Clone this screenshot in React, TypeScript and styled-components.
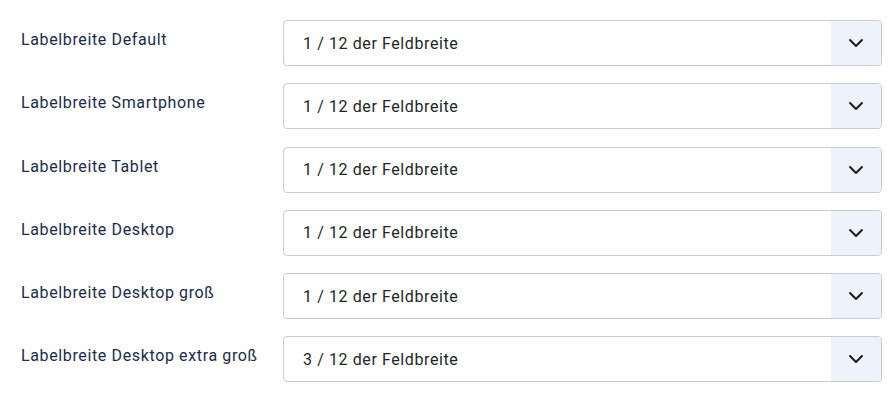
import React, { FC } from 'react';
import styled, { createGlobalStyle } from 'styled-components';

const GlobalStyle = createGlobalStyle`
  html, body {
    margin: 0;
    padding: 0;
    background: #ffffff;
  }
  body {
    font-family: Roboto, "Liberation Sans", Arial, sans-serif;
  }
`;

const Form = styled.div`
  display: flex;
  flex-direction: column;
  gap: 17.3px;
  padding: 20px 12px 0 21px;
`;

const Row = styled.div`
  display: grid;
  grid-template-columns: 262px 1fr;
  align-items: start;
`;

const Label = styled.label`
  padding-top: 8px;
  font-size: 16px;
  line-height: 24px;
  letter-spacing: 0.63px;
  color: #1c2b49;
`;

const SelectBox = styled.div`
  display: flex;
  align-items: stretch;
  height: 46px;
  box-sizing: border-box;
  border: 1px solid #c5cdd9;
  border-radius: 4px;
  background: #ffffff;
  overflow: hidden;
`;

const Value = styled.span`
  flex: 1;
  display: flex;
  align-items: center;
  padding: 1px 0 0 19px;
  font-size: 16px;
  line-height: 24px;
  letter-spacing: 0.6px;
  color: #22262a;
`;

const Toggle = styled.span`
  width: 50px;
  display: flex;
  align-items: center;
  justify-content: center;
  background: #eef2fa;
`;

const Chevron: FC = () => (
  <svg width="16" height="10" viewBox="0 0 16 10" aria-hidden="true">
    <path d="M2 2l6 6 6-6" fill="none" stroke="#1b1b1b" strokeWidth="2" strokeLinecap="round" strokeLinejoin="round" />
  </svg>
);

const rows = [
  { label: 'Labelbreite Default', value: '1 / 12 der Feldbreite' },
  { label: 'Labelbreite Smartphone', value: '1 / 12 der Feldbreite' },
  { label: 'Labelbreite Tablet', value: '1 / 12 der Feldbreite' },
  { label: 'Labelbreite Desktop', value: '1 / 12 der Feldbreite' },
  { label: 'Labelbreite Desktop groß', value: '1 / 12 der Feldbreite' },
  { label: 'Labelbreite Desktop extra groß', value: '3 / 12 der Feldbreite' },
];

const App: FC = () => (
  <>
    <GlobalStyle />
    <Form>
      {rows.map((r) => (
        <Row key={r.label}>
          <Label>{r.label}</Label>
          <SelectBox>
            <Value>{r.value}</Value>
            <Toggle>
              <Chevron />
            </Toggle>
          </SelectBox>
        </Row>
      ))}
    </Form>
  </>
);

export default App;
